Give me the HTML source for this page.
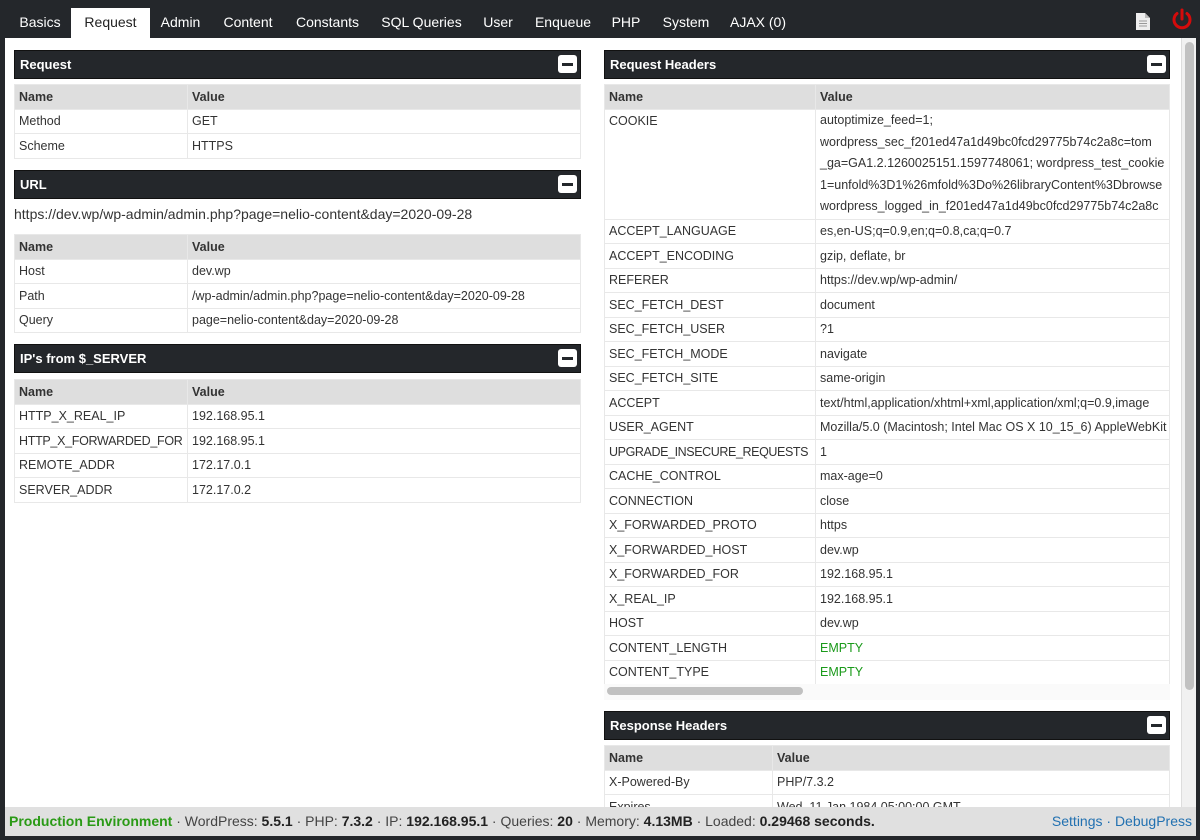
<!DOCTYPE html>
<html><head><meta charset="utf-8"><style>
*{box-sizing:border-box;margin:0;padding:0}
body{width:1200px;height:840px;background:#24272b;font-family:"Liberation Sans",sans-serif;font-size:13px;color:#333;position:relative;overflow:hidden}
.tabs{position:absolute;left:0;top:0;height:38px;width:1200px}
.tab{position:absolute;top:8px;height:30px;line-height:28px;color:#fff;font-size:14px;text-align:center}
.tab.act{background:#fff;color:#222}
.main{position:absolute;left:5px;top:38px;width:1191px;height:769px;background:#fff;overflow:hidden}
.sb{position:absolute;left:1176px;top:0;width:15px;height:769px;background:#f1f1f1;border-left:1px solid #ddd}
.sb div{position:absolute;left:3px;top:4px;width:9px;height:648px;background:#c1c1c1;border-radius:5px}
.ph{position:absolute;height:29px;background:#24272b;color:#fff;font-weight:bold;font-size:13px;line-height:28px;padding-left:5px;border:1px solid #111}
.ph i{position:absolute;right:3px;top:4px;width:19px;height:18px;background:#fff;border-radius:3px}
.ph i:after{content:"";position:absolute;left:4px;top:8px;width:11px;height:3px;background:#24272b}
table{position:absolute;border-collapse:collapse;table-layout:fixed;background:#fff;font-size:12.5px}
td,th{border:1px solid #e8e8e8;padding:0 4px;height:24.5px;text-align:left;white-space:nowrap;overflow:hidden;font-weight:normal;vertical-align:middle}
th{background:#dedede;font-weight:bold;color:#333}
.g{color:#1a9a1a}
.foot{position:absolute;left:5px;top:807px;width:1191px;height:29px;background:#e0e0e0;line-height:29px;font-size:14px;color:#444;padding-left:4px}
.foot b{color:#222;font-weight:bold}
.foot .pe{color:#2a9a16;font-weight:bold}
.foot .r{position:absolute;right:4px;top:0;color:#2271b1}
</style></head><body>
<div class="tabs">
<div class="tab" style="left:10px;width:60px">Basics</div>
<div class="tab act" style="left:71px;width:79px">Request</div>
<div class="tab" style="left:152px;width:57px">Admin</div>
<div class="tab" style="left:213px;width:70px">Content</div>
<div class="tab" style="left:286px;width:83px">Constants</div>
<div class="tab" style="left:373px;width:97px">SQL Queries</div>
<div class="tab" style="left:474px;width:48px">User</div>
<div class="tab" style="left:526px;width:74px">Enqueue</div>
<div class="tab" style="left:603px;width:46px">PHP</div>
<div class="tab" style="left:652px;width:68px">System</div>
<div class="tab" style="left:723px;width:70px">AJAX (0)</div>
<svg style="position:absolute;left:1136px;top:13px" width="14" height="17" viewBox="0 0 14 17"><path d="M0 0H9L14 5V17H0Z" fill="#eee"/><path d="M9 0V5H14" fill="#bbb"/><path d="M3 8H11M3 10.5H11M3 13H11" stroke="#999" stroke-width="1"/></svg>
<svg style="position:absolute;left:1170px;top:8px" width="24" height="24" viewBox="0 0 24 24"><path d="M7 5.5A8 8 0 1 0 17 5.5" fill="none" stroke="#d40b0b" stroke-width="3" stroke-linecap="round"/><path d="M12 2V11" stroke="#d40b0b" stroke-width="3" stroke-linecap="round"/></svg>
</div>
<div class="main">
<div class="ph" style="left:9px;top:12px;width:567px">Request<i></i></div>
<table style="left:9px;top:46px;width:567px"><col style="width:173px"><col>
<tr><th>Name</th><th>Value</th></tr><tr><td>Method</td><td>GET</td></tr><tr><td>Scheme</td><td>HTTPS</td></tr></table>
<div class="ph" style="left:9px;top:132px;width:567px">URL<i></i></div>
<div style="position:absolute;left:9px;top:168px;font-size:14px">https://dev.wp/wp-admin/admin.php?page=nelio-content&amp;day=2020-09-28</div>
<table style="left:9px;top:196px;width:567px"><col style="width:173px"><col>
<tr><th>Name</th><th>Value</th></tr><tr><td>Host</td><td>dev.wp</td></tr><tr><td>Path</td><td>/wp-admin/admin.php?page=nelio-content&amp;day=2020-09-28</td></tr><tr><td>Query</td><td>page=nelio-content&amp;day=2020-09-28</td></tr></table>
<div class="ph" style="left:9px;top:306px;width:567px">IP's from $_SERVER<i></i></div>
<table style="left:9px;top:341px;width:567px"><col style="width:173px"><col>
<tr><th>Name</th><th>Value</th></tr><tr><td>HTTP_X_REAL_IP</td><td>192.168.95.1</td></tr><tr><td style="padding-right:0;letter-spacing:-0.3px">HTTP_X_FORWARDED_FOR</td><td>192.168.95.1</td></tr><tr><td>REMOTE_ADDR</td><td>172.17.0.1</td></tr><tr><td>SERVER_ADDR</td><td>172.17.0.2</td></tr></table>

<div class="ph" style="left:599px;top:12px;width:566px">Request Headers<i></i></div>
<table style="left:599px;top:46px;width:566px"><col style="width:211px"><col>
<tr><th>Name</th><th>Value</th></tr>
<tr><td style="vertical-align:top;padding-top:4px;height:110px">COOKIE</td><td style="line-height:21.6px;height:110px;padding-top:0">autoptimize_feed=1;<br>wordpress_sec_f201ed47a1d49bc0fcd29775b74c2a8c=tom<br>_ga=GA1.2.1260025151.1597748061; wordpress_test_cookie<br>1=unfold%3D1%26mfold%3Do%26libraryContent%3Dbrowse<br>wordpress_logged_in_f201ed47a1d49bc0fcd29775b74c2a8c</td></tr>
<tr><td>ACCEPT_LANGUAGE</td><td>es,en-US;q=0.9,en;q=0.8,ca;q=0.7</td></tr>
<tr><td>ACCEPT_ENCODING</td><td>gzip, deflate, br</td></tr>
<tr><td>REFERER</td><td>https://dev.wp/wp-admin/</td></tr>
<tr><td>SEC_FETCH_DEST</td><td>document</td></tr>
<tr><td>SEC_FETCH_USER</td><td>?1</td></tr>
<tr><td>SEC_FETCH_MODE</td><td>navigate</td></tr>
<tr><td>SEC_FETCH_SITE</td><td>same-origin</td></tr>
<tr><td>ACCEPT</td><td>text/html,application/xhtml+xml,application/xml;q=0.9,image</td></tr>
<tr><td>USER_AGENT</td><td>Mozilla/5.0 (Macintosh; Intel Mac OS X 10_15_6) AppleWebKit</td></tr>
<tr><td style="padding-right:0;letter-spacing:-0.4px">UPGRADE_INSECURE_REQUESTS</td><td>1</td></tr>
<tr><td>CACHE_CONTROL</td><td>max-age=0</td></tr>
<tr><td>CONNECTION</td><td>close</td></tr>
<tr><td>X_FORWARDED_PROTO</td><td>https</td></tr>
<tr><td>X_FORWARDED_HOST</td><td>dev.wp</td></tr>
<tr><td>X_FORWARDED_FOR</td><td>192.168.95.1</td></tr>
<tr><td>X_REAL_IP</td><td>192.168.95.1</td></tr>
<tr><td>HOST</td><td>dev.wp</td></tr>
<tr><td>CONTENT_LENGTH</td><td class="g">EMPTY</td></tr>
<tr><td>CONTENT_TYPE</td><td class="g">EMPTY</td></tr>
</table>
<div style="position:absolute;left:599px;top:646px;width:566px;height:16px;background:#fafafa"><div style="position:absolute;left:3px;top:3px;width:196px;height:8px;background:#c1c1c1;border-radius:4px"></div></div>
<div class="ph" style="left:599px;top:673px;width:566px">Response Headers<i></i></div>
<table style="left:599px;top:707px;width:566px"><col style="width:168px"><col>
<tr><th>Name</th><th>Value</th></tr><tr><td>X-Powered-By</td><td>PHP/7.3.2</td></tr><tr><td>Expires</td><td>Wed, 11 Jan 1984 05:00:00 GMT</td></tr></table>
<div class="sb"><div></div></div>
</div>
<div class="foot"><span class="pe">Production Environment</span> · WordPress: <b>5.5.1</b> · PHP: <b>7.3.2</b> · IP: <b>192.168.95.1</b> · Queries: <b>20</b> · Memory: <b>4.13MB</b> · Loaded: <b>0.29468 seconds.</b><span class="r">Settings · DebugPress</span></div>
</body></html>
